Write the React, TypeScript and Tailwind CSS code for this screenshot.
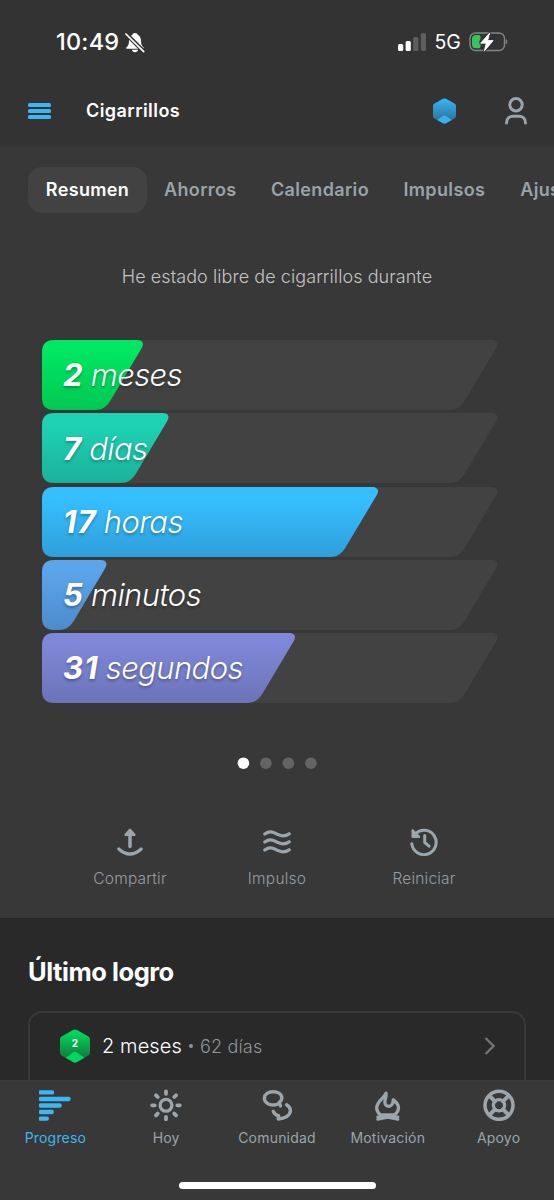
import React, { useState } from 'react';

const TRACK_WIDTH = 455.5;

const tabs = ['Resumen', 'Ahorros', 'Calendario', 'Impulsos', 'Ajustes'];

const tabSpacing = ['mr-[17px]', 'mr-[34.5px]', 'mr-[34.5px]', 'mr-[35px]', ''];

const counters = [
  { id: 'months', value: 2, unit: 'meses', width: 101, from: '#00e763', to: '#00c853' },
  { id: 'days', value: 7, unit: 'días', width: 126.5, from: '#1dd3b4', to: '#1bb199' },
  { id: 'hours', value: 17, unit: 'horas', width: 336, from: '#36bfff', to: '#2f9fdb' },
  { id: 'minutes', value: 5, unit: 'minutos', width: 64.5, from: '#5ba5ec', to: '#4d8bcb' },
  { id: 'seconds', value: 31, unit: 'segundos', width: 253, from: '#7f87d8', to: '#6b74b8' },
];

// Bar with rounded left corners and a slanted right edge
function barPath(w: number) {
  return `M12 0H${w - 6}C${w - 0.5} 0 ${w + 1.5} 3.5 ${w - 1.2} 8L${w - 32.5} 60.5C${w - 36.5} 67 ${w - 41} 70 ${w - 48} 70H12C4 70 0 66 0 58V12C0 4 4 0 12 0Z`;
}

function CounterBar({ counter }: { counter: (typeof counters)[number] }) {
  return (
    <div className="relative h-[70px]">
      <svg className="absolute inset-0 overflow-visible" width={TRACK_WIDTH} height="70">
        <defs>
          <linearGradient id={counter.id} x1="0" y1="0" x2="0" y2="1">
            <stop offset="0.15" stopColor={counter.from} />
            <stop offset="1" stopColor={counter.to} />
          </linearGradient>
        </defs>
        <path d={barPath(TRACK_WIDTH)} fill="#424242" />
        <path d={barPath(counter.width)} fill={`url(#${counter.id})`} />
      </svg>
      <div className="relative flex h-full items-center gap-[7px] pl-[21px] pt-[1px] text-[31px] italic text-white [text-shadow:0_2px_3px_rgba(0,0,0,0.3)]">
        <span className="font-bold tracking-[1.2px]">{counter.value}</span>
        <span className="font-light tracking-[-0.6px]">{counter.unit}</span>
      </div>
    </div>
  );
}

function HexBadge({ id, from, to, className }: { id: string; from: string; to: string; className: string }) {
  return (
    <svg className={className} viewBox="0 0 30 34" preserveAspectRatio="none">
      <defs>
        <linearGradient id={id} x1="0" y1="0" x2="0" y2="1">
          <stop offset="0.1" stopColor={from} />
          <stop offset="0.9" stopColor={to} />
        </linearGradient>
      </defs>
      <path d="M13 1Q15 0 17 1L28 7.2Q30 8.3 30 10.5V23.5Q30 25.7 28 26.8L17 33Q15 34 13 33L2 26.8Q0 25.7 0 23.5V10.5Q0 8.3 2 7.2Z" fill={`url(#${id})`} />
      <path d="M5.5 28.8L13 23.5Q15 22.1 17 23.5L24.5 28.8L17 33Q15 34 13 33Z" fill={from} />
    </svg>
  );
}

function BellOff() {
  return (
    <svg className="ml-[6px] h-[21px] w-[20px]" viewBox="0 0 20 21" fill="#fff">
      <path d="M10 1C11.6 1 12.4 1.8 12.6 2.8C15 4 16 6 16 9C16 12.5 17 13.8 18.4 15.2C19.2 16 18.7 16.7 18 16.7H2C1.3 16.7.8 16 1.6 15.2C3 13.8 4 12.5 4 9C4 6 5 4 7.4 2.8C7.6 1.8 8.4 1 10 1ZM6.8 17.8H13.2C12.7 19.4 11.5 20.3 10 20.3S7.3 19.4 6.8 17.8Z" />
      <path d="M1 1.8L19 19.8" stroke="#333" strokeWidth="4.2" />
      <path d="M.9 2L18.7 19.6" stroke="#fff" strokeWidth="1.7" strokeLinecap="round" />
    </svg>
  );
}

function Battery() {
  return (
    <svg className="ml-[8px] h-[22px] w-[39px]" viewBox="0 0 39 22" fill="none">
      <rect x="1" y="2" width="34.5" height="17.5" rx="5.5" stroke="#858585" strokeWidth="1.4" />
      <path d="M37.3 8.7Q38.6 10.8 37.3 12.8Z" fill="#858585" stroke="#858585" />
      <path d="M7 4H10.5C12 5 12 8 10 10.8C12.5 13 12 16 10.5 17.3H7Q3 17.3 3 13.3V8Q3 4 7 4Z" fill="#33c759" />
      <path d="M20.8 1.8L11.6 12.2H17.2L15.2 20.2L24.2 9.6H18.7Z" fill="#fff" stroke="#333" strokeWidth="2.5" strokeLinejoin="round" paintOrder="stroke" />
      <path d="M20.8 1.8L11.6 12.2H17.2L15.2 20.2L24.2 9.6H18.7Z" fill="#fff" stroke="#fff" strokeWidth=".6" strokeLinejoin="round" />
    </svg>
  );
}

const actions = [
  {
    label: 'Compartir',
    icon: (
      <g strokeWidth="3.5">
        <path d="M14 18.5V4" />
        <path d="M9.6 6.8L14 1.8L18.4 6.8Z" fill="currentColor" strokeWidth="2.4" />
        <path d="M2.8 21Q14 31 25.2 21" strokeWidth="3.2" />
      </g>
    ),
  },
  {
    label: 'Impulso',
    icon: (
      <g strokeWidth="3.2">
        <path d="M1.8 6C6.5 2.7 9.5 3.8 14 6.2S22 8.5 26.2 5.8" />
        <path d="M1.8 14C6.5 10.7 9.5 11.8 14 14.2S22 16.5 26.2 13.8" />
        <path d="M1.8 22C6.5 18.7 9.5 19.8 14 22.2S22 24.5 26.2 21.8" />
      </g>
    ),
  },
  {
    label: 'Reiniciar',
    icon: (
      <g strokeWidth="3">
        <path d="M5.5 5.6A12.2 12.2 0 1 1 1.8 15.7" />
        <path d="M2.6 2.2V8.8H9.2Z" fill="currentColor" strokeWidth="2.2" />
        <path d="M14.7 7.5V14.5L19 18.2" />
      </g>
    ),
  },
];

const navItems = [
  {
    label: 'Progreso',
    icon: <path d="M1.7 3.4H13M1.7 10H29.5M1.7 16.5H20.7M1.7 23H12.7M1.7 29.6H7.8" strokeWidth="4.4" />,
  },
  {
    label: 'Hoy',
    icon: (
      <g strokeWidth="3.8">
        <circle cx="16" cy="16.3" r="5.9" strokeWidth="3.3" />
        <path d="M16 2.3V4.8M16 27.8V30.3M2.2 16.3H4.7M27.3 16.3H29.8M6 6.3L7.7 8M24.3 24.6L26 26.3M6 26.3L7.7 24.6M24.3 8L26 6.3" />
      </g>
    ),
  },
  {
    label: 'Comunidad',
    icon: (
      <g strokeWidth="3.4">
        <path d="M16.3 15.2C13.5 16.4 10.3 16.2 7.5 15C4.5 13.6 3.2 11.6 3.4 8.9C3.7 5 7.3 2.7 12 2.7C17 2.7 20.8 5 20.8 8.8C20.8 10.8 19.8 12.4 18.2 13.4L19.5 17" />
        <path d="M12.3 22.4C13.2 24.8 15.2 26.2 17.6 26.6L17.2 30C23.8 29.4 29.4 26.7 29.4 21.6C29.4 18.6 27.6 17 25.6 15.8" />
      </g>
    ),
  },
  {
    label: 'Motivación',
    icon: (
      <g strokeWidth="3.3">
        <path d="M14 4.2C13 8.5 4.7 12 4.7 19C4.7 22 6 24 8.5 26H22.5C25 24 26.5 22 26.5 18.5C26.5 15 24 13 21.3 10.8C21.2 14.8 19.3 17.5 16.5 17.3C13.3 17 12 14 13.3 10.5C14 8 14.3 6 14 4.2Z" />
        <path d="M5.7 28C12 27.4 20 28.8 26 30.4M26 28C20 27.4 12 28.8 5.7 30.4" strokeWidth="2.8" />
      </g>
    ),
  },
  {
    label: 'Apoyo',
    icon: (
      <g strokeWidth="3.3">
        <circle cx="16" cy="16.3" r="14" strokeWidth="3.6" />
        <circle cx="16" cy="16.3" r="5.6" />
        <path d="M6.5 6.8L12 12.3M20 20.3L25.5 25.8M25.5 6.8L20 12.3M12 20.3L6.5 25.8" strokeWidth="4" />
      </g>
    ),
  },
];

export default function App() {
  const [activeTab, setActiveTab] = useState('Resumen');
  const [activeNav, setActiveNav] = useState('Progreso');

  return (
    <div className="flex h-[1200px] w-[554px] flex-col overflow-hidden bg-[#383838] font-['Inter',sans-serif]">
      <div className="flex h-[77px] shrink-0 items-start justify-between bg-[#333333] pl-[56px] pr-[46px] pt-[31px] text-white">
        <div className="flex h-[22px] items-center">
          <span className="text-[23.5px] font-medium tracking-[0.2px]">10:49</span>
          <BellOff />
        </div>
        <div className="flex h-[22px] items-center">
          <svg className="mr-[8px] h-[20px] w-[28px]" viewBox="0 0 28 20">
            <rect x="0" y="12" width="5.2" height="7" rx="1.5" fill="#fff" />
            <rect x="7.6" y="9" width="5.2" height="10" rx="1.5" fill="#fff" />
            <rect x="15.2" y="5" width="5.2" height="14" rx="1.5" fill="#5e5e5e" />
            <rect x="22.8" y="1" width="5.2" height="18" rx="1.5" fill="#5e5e5e" />
          </svg>
          <span className="pt-[1px] text-[19.5px] tracking-[0.1px]">5G</span>
          <Battery />
        </div>
      </div>

      <header className="flex h-[69px] shrink-0 items-center border-b border-[#353535] bg-[#333333] pl-[28px] pr-[26px]">
        <button className="flex w-[23px] flex-col gap-[2px]">
          <span className="h-[4px] w-full rounded-[1.5px] bg-[#3fb6f2]" />
          <span className="h-[4px] w-full rounded-[1.5px] bg-[#3fb6f2]" />
          <span className="h-[4px] w-full rounded-[1.5px] bg-[#3fb6f2]" />
        </button>
        <h1 className="ml-[35px] flex-1 pb-[2px] text-[18px] font-semibold tracking-[0.45px] text-white">Cigarrillos</h1>
        <HexBadge id="headerBadge" from="#36b0ef" to="#2d6f92" className="mr-[48px] h-[26px] w-[23px]" />
        <svg className="h-[28px] w-[24px]" viewBox="0 0 24 28" fill="none" stroke="#9aa4aa" strokeWidth="3" strokeLinecap="round">
          <circle cx="12" cy="7.8" r="6.2" />
          <path d="M2.5 26C2.5 21.5 5.5 19.2 9 19.2H15C18.5 19.2 21.5 21.5 21.5 26" />
        </svg>
      </header>

      <main className="flex h-[772px] shrink-0 flex-col">
        <nav className="flex h-[88px] items-start overflow-hidden pl-[28px] pt-[21px]">
          {tabs.map((tab, i) => (
            <button
              key={tab}
              onClick={() => setActiveTab(tab)}
              className={`h-[46px] shrink-0 pb-[1px] text-[18px] font-semibold tracking-[0.35px] ${tabSpacing[i]} ${
                activeTab === tab ? 'w-[119px] rounded-[14px] bg-[#424242] text-white' : 'text-[#99a3a9]'
              }`}
            >
              {tab}
            </button>
          ))}
        </nav>

        <p className="mt-[31px] text-center text-[18px] font-light leading-[24px] tracking-[0.07px] text-[#c4c4c4]">
          He estado libre de cigarrillos durante
        </p>

        <div className="mt-[51px] flex flex-col gap-[3.25px] pl-[42px]">
          {counters.map((counter) => (
            <CounterBar key={counter.id} counter={counter} />
          ))}
        </div>

        <svg className="mx-auto mt-[54px] h-[12px] w-[80px]" viewBox="0 0 80 12">
          <circle cx="6.4" cy="6.2" r="5.8" fill="#fff" />
          <circle cx="28.9" cy="6.2" r="5.8" fill="#646464" />
          <circle cx="51.4" cy="6.2" r="5.8" fill="#646464" />
          <circle cx="73.9" cy="6.2" r="5.8" fill="#646464" />
        </svg>

        <div className="mx-auto mt-[59px] grid w-[441px] grid-cols-3">
          {actions.map((action) => (
            <button key={action.label} className="flex flex-col items-center text-[#9aa6ae]">
              <svg className="size-[28px]" viewBox="0 0 28 28" fill="none" stroke="currentColor" strokeLinecap="round" strokeLinejoin="round">
                {action.icon}
              </svg>
              <span className="mt-[13px] text-[15.5px] font-light leading-[20px] tracking-[0.2px] text-[#959da2]">{action.label}</span>
            </button>
          ))}
        </div>
      </main>

      <section className="flex h-[162px] shrink-0 flex-col bg-[#292929] px-[28px]">
        <h2 className="mt-[39px] text-[25.5px] font-bold leading-[30px] tracking-[-0.45px] text-white">Último logro</h2>
        <div className="mt-[24px] flex flex-1 items-start rounded-t-[14px] border-2 border-b-0 border-[#383838] px-[30px] pt-[16px]">
          <div className="relative h-[34px] w-[30px]">
            <HexBadge id="achievement" from="#00d75c" to="#14763a" className="h-full w-full" />
            <span className="absolute inset-x-0 top-[7px] text-center text-[10px] font-bold leading-[14px] text-white">2</span>
          </div>
          <div className="ml-[12px] flex h-[34px] flex-1 items-center">
            <span className="text-[20px] font-light tracking-[0.1px] text-white">2 meses</span>
            <span className="ml-[7px] size-[4px] rounded-full bg-[#8d969b]" />
            <span className="ml-[7px] text-[18px] font-light tracking-[0.2px] text-[#8d969b]">62 días</span>
          </div>
          <svg className="-mr-[1px] mt-[8px] h-[18px] w-[11px]" viewBox="0 0 11 18" fill="none" stroke="#737373" strokeWidth="2.4">
            <path d="M1.5 1L9.5 9L1.5 17" />
          </svg>
        </div>
      </section>

      <footer className="flex flex-1 flex-col items-center border-t border-[#3b3b3b] bg-[#383838]">
        <nav className="grid w-full grid-cols-5 pt-[8px]">
          {navItems.map((item) => (
            <button
              key={item.label}
              onClick={() => setActiveNav(item.label)}
              className={`flex flex-col items-center ${activeNav === item.label ? 'text-[#3fb6f2]' : 'text-[#9ba5ab]'}`}
            >
              <svg className="size-[32px]" viewBox="0 0 32 32" fill="none" stroke="currentColor" strokeLinecap="round" strokeLinejoin="round">
                {item.icon}
              </svg>
              <span className="mt-[7px] text-[14px] leading-[20px] tracking-[0.2px]">{item.label}</span>
            </button>
          ))}
        </nav>
        <div className="mt-[34px] h-[7px] w-[197px] rounded-full bg-white" />
      </footer>
    </div>
  );
}
